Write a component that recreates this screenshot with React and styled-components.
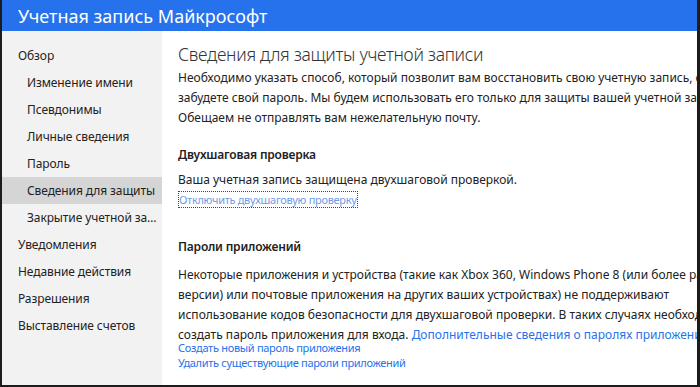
import styled, { createGlobalStyle } from 'styled-components'

const GlobalStyle = createGlobalStyle`
    html, body {
        margin: 0;
        padding: 0;
        background: #fff;
    }
    body {
        font-family: "Segoe UI", "Noto Sans", "Open Sans", sans-serif;
        color: #222;
    }
`

const navItems = [
    { label: 'Обзор', sub: false },
    { label: 'Изменение имени', sub: true },
    { label: 'Псевдонимы', sub: true },
    { label: 'Личные сведения', sub: true },
    { label: 'Пароль', sub: true },
    { label: 'Сведения для защиты', sub: true, active: true },
    { label: 'Закрытие учетной записи', sub: true },
    { label: 'Уведомления', sub: false },
    { label: 'Недавние действия', sub: false },
    { label: 'Разрешения', sub: false },
    { label: 'Выставление счетов', sub: false },
]

const Frame = styled.div`
    box-sizing: border-box;
    width: 700px;
    height: 387px;
    display: flex;
    flex-direction: column;
    border-left: 2px solid #1c1c1c;
    border-right: 3px solid #1c1c1c;
    border-bottom: 2px solid #1c1c1c;
    overflow: hidden;
`

const Header = styled.header`
    flex: 0 0 31px;
    display: flex;
    align-items: center;
    padding-left: 16px;
    background: #2672ec;
    color: #fff;
    font-size: 18px;
`

const Body = styled.div`
    flex: 1;
    display: flex;
    min-height: 0;
`

const Sidebar = styled.nav`
    box-sizing: border-box;
    flex: 0 0 160px;
    width: 160px;
    min-width: 0;
    background: #f2f2f2;
    padding-top: 11px;
    display: flex;
    flex-direction: column;
`

const NavItem = styled.div`
    height: 27px;
    line-height: 27px;
    padding-left: ${p => (p.$sub ? '25px' : '16px')};
    padding-right: 4px;
    font-size: 12px;
    letter-spacing: -0.1px;
    color: #222;
    white-space: nowrap;
    overflow: hidden;
    text-overflow: ellipsis;
    background: ${p => (p.$active ? '#d5d5d5' : 'transparent')};
`

const Main = styled.main`
    flex: 1;
    min-width: 0;
    padding: 9px 0 0 16px;
    white-space: nowrap;
    overflow: hidden;
    font-size: 12px;
    line-height: 20px;
`

const Title = styled.h1`
    margin: 0;
    font-size: 17.5px;
    font-weight: 300;
    letter-spacing: -0.3px;
    line-height: 28px;
    color: #333;
`

const Paragraph = styled.p`
    margin: 0;
`

const SectionTitle = styled.h2`
    margin: ${p => p.$top} 0 ${p => p.$bottom};
    font-size: 12px;
    font-weight: 600;
    letter-spacing: -0.2px;
    line-height: 20px;
`

const Link = styled.a`
    color: #2672ec;
    text-decoration: none;
    cursor: pointer;
`

const FocusLink = styled(Link)`
    display: inline-block;
    margin: 2px 0 0 1px;
    font-size: 11px;
    letter-spacing: -0.3px;
    line-height: 15px;
    color: #6f9be6;
    outline: 1px dotted #444;
`

const LinkList = styled.div`
    display: flex;
    flex-direction: column;
    margin-top: -5px;
    font-size: 11px;
    letter-spacing: -0.3px;
    line-height: 15px;
`

export default function App() {
    return (
        <>
            <GlobalStyle />
            <Frame>
                <Header>Учетная запись Майкрософт</Header>
                <Body>
                    <Sidebar>
                        {navItems.map(item => (
                            <NavItem key={item.label} $sub={item.sub} $active={item.active}>
                                {item.label}
                            </NavItem>
                        ))}
                    </Sidebar>
                    <Main>
                        <Title>Сведения для защиты учетной записи</Title>
                        <Paragraph>
                            Необходимо указать способ, который позволит вам восстановить свою учетную запись, если вы<br />
                            забудете свой пароль. Мы будем использовать его только для защиты вашей учетной записи.<br />
                            Обещаем не отправлять вам нежелательную почту.
                        </Paragraph>

                        <SectionTitle $top="17px" $bottom="5px">Двухшаговая проверка</SectionTitle>
                        <Paragraph>Ваша учетная запись защищена двухшаговой проверкой.</Paragraph>
                        <FocusLink>Отключить двухшаговую проверку</FocusLink>

                        <SectionTitle $top="27px" $bottom="8px">Пароли приложений</SectionTitle>
                        <Paragraph>
                            Некоторые приложения и устройства (такие как Xbox 360, Windows Phone 8 (или более ранней<br />
                            версии) или почтовые приложения на других ваших устройствах) не поддерживают<br />
                            использование кодов безопасности для двухшаговой проверки. В таких случаях необходимо<br />
                            создать пароль приложения для входа. <Link>Дополнительные сведения о паролях приложений</Link>
                        </Paragraph>
                        <LinkList>
                            <Link>Создать новый пароль приложения</Link>
                            <Link>Удалить существующие пароли приложений</Link>
                        </LinkList>
                    </Main>
                </Body>
            </Frame>
        </>
    )
}
